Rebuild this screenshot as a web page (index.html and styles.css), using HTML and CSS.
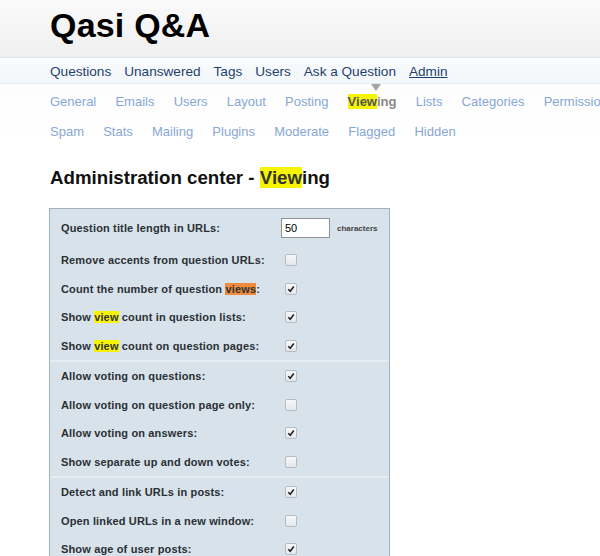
FILE: index.html
```html
<!DOCTYPE html>
<html>
<head>
<meta charset="utf-8">
<link rel="stylesheet" href="styles.css">
</head>
<body>
<div class="header">
  <div class="logo">Qasi Q&amp;A</div>
</div>
<div class="nav">
  <a>Questions</a><a>Unanswered</a><a>Tags</a><a>Users</a><a>Ask a Question</a><a class="cur">Admin</a>
</div>
<div class="sub">
  <div class="subrow">
    <a>General</a><a>Emails</a><a>Users</a><a>Layout</a><a>Posting</a><a class="sel"><mark class="y">View</mark>ing</a><a>Lists</a><a>Categories</a><a>Permissions</a>
  </div>
  <div class="subrow">
    <a>Spam</a><a>Stats</a><a>Mailing</a><a>Plugins</a><a>Moderate</a><a>Flagged</a><a>Hidden</a>
  </div>
</div>
<h1 class="title">Administration center - <mark class="y">View</mark>ing</h1>
<div class="box">
  <div class="group">
    <div class="row first"><span class="lbl">Question title length in URLs:</span><span class="val"><span class="inp">50</span><span class="unit">characters</span></span></div>
    <div class="row"><span class="lbl">Remove accents from question URLs:</span><span class="val"><span class="cb"></span></span></div>
    <div class="row"><span class="lbl">Count the number of question <mark class="o">views</mark>:</span><span class="val"><span class="cb on"><svg viewBox="0 0 8 8"><path d="M1.3 4.3 L3.2 6.2 L6.8 1.6" /></svg></span></span></div>
    <div class="row"><span class="lbl">Show <mark class="y">view</mark> count in question lists:</span><span class="val"><span class="cb on"><svg viewBox="0 0 8 8"><path d="M1.3 4.3 L3.2 6.2 L6.8 1.6" /></svg></span></span></div>
    <div class="row"><span class="lbl">Show <mark class="y">view</mark> count on question pages:</span><span class="val"><span class="cb on"><svg viewBox="0 0 8 8"><path d="M1.3 4.3 L3.2 6.2 L6.8 1.6" /></svg></span></span></div>
  </div>
  <div class="group">
    <div class="row"><span class="lbl">Allow voting on questions:</span><span class="val"><span class="cb on"><svg viewBox="0 0 8 8"><path d="M1.3 4.3 L3.2 6.2 L6.8 1.6" /></svg></span></span></div>
    <div class="row"><span class="lbl">Allow voting on question page only:</span><span class="val"><span class="cb"></span></span></div>
    <div class="row"><span class="lbl">Allow voting on answers:</span><span class="val"><span class="cb on"><svg viewBox="0 0 8 8"><path d="M1.3 4.3 L3.2 6.2 L6.8 1.6" /></svg></span></span></div>
    <div class="row"><span class="lbl">Show separate up and down votes:</span><span class="val"><span class="cb"></span></span></div>
  </div>
  <div class="group">
    <div class="row"><span class="lbl">Detect and link URLs in posts:</span><span class="val"><span class="cb on"><svg viewBox="0 0 8 8"><path d="M1.3 4.3 L3.2 6.2 L6.8 1.6" /></svg></span></span></div>
    <div class="row"><span class="lbl">Open linked URLs in a new window:</span><span class="val"><span class="cb"></span></span></div>
    <div class="row"><span class="lbl">Show age of user posts:</span><span class="val"><span class="cb on"><svg viewBox="0 0 8 8"><path d="M1.3 4.3 L3.2 6.2 L6.8 1.6" /></svg></span></span></div>
  </div>
</div>
</body>
</html>
```
FILE: styles.css
```css
html, body {
  margin: 0;
  padding: 0;
  overflow: hidden;
  background: #fff;
  font-family: "Liberation Sans", Arial, sans-serif;
}
body {
  width: 600px;
  height: 556px;
}
.header {
  height: 58px;
  background: linear-gradient(#fafafa, #efefef);
  border-bottom: 1px solid #dde5ec;
  box-sizing: border-box;
  padding-left: 50px;
}
.logo {
  font-weight: bold;
  font-size: 34px;
  line-height: 50px;
  color: #000;
  letter-spacing: 0.2px;
}
.nav {
  height: 26px;
  box-sizing: border-box;
  background: linear-gradient(#f9fbfd, #f3f7fa);
  border-bottom: 1px solid #e4ebf1;
  padding-left: 50px;
  display: flex;
  gap: 13px;
  align-items: center;
  padding-top: 2px;
}
.nav a {
  color: #1e416b;
  font-size: 13.6px;
}
.nav a.cur {
  text-decoration: underline;
}
.sub {
  padding-left: 50px;
  padding-top: 10px;
  display: flex;
  flex-direction: column;
  gap: 14px;
  background: linear-gradient(#fdfdfd, #fff);
}
.subrow {
  display: flex;
  gap: 19.2px;
  white-space: nowrap;
  width: 700px;
}
.subrow a {
  color: #87a7d6;
  font-size: 13px;
  line-height: 16px;
}
.subrow a.sel {
  color: #888;
  font-weight: bold;
  position: relative;
}
.subrow a.sel::before {
  content: "";
  position: absolute;
  left: 23px;
  top: -10px;
  border-left: 5px solid transparent;
  border-right: 5px solid transparent;
  border-top: 7px solid #a4a4a4;
}
mark {
  color: inherit;
  padding: 0;
}
mark.y { background: #f6f400; color: #333; }
.subrow a.sel mark.y { color: #555; }
mark.o { background: #ef8a3e; color: #333; }
.title {
  margin: 26px 0 0 50px;
  font-size: 18.7px;
  line-height: 24px;
  font-weight: bold;
  color: #111;
}
.box {
  margin: 18px 0 0 49px;
  width: 341px;
  box-sizing: border-box;
  border: 1px solid #a3b2c0;
  background: #d7e2ea;
  padding-top: 4px;
}
.group + .group {
  border-top: 2px solid #e4ecf1;
}
.row {
  display: flex;
  align-items: center;
  height: 28.5px;
  padding-left: 11px;
  font-size: 11px;
  font-weight: bold;
  color: #2b3035;
}
.row.first {
  height: 30px;
  margin-bottom: 3px;
}
.lbl {
  width: 224px;
  flex: none;
  letter-spacing: 0.15px;
}
.val {
  display: flex;
  align-items: center;
}
.inp {
  display: block;
  width: 49px;
  height: 20px;
  box-sizing: border-box;
  border: 1px solid #8c9298;
  background: #fff;
  font-weight: normal;
  font-size: 11px;
  line-height: 18px;
  padding-left: 3px;
  color: #000;
  margin-left: -4px;
}
.unit {
  font-size: 8px;
  color: #444;
  margin-left: 7px;
}
.cb {
  display: block;
  width: 10px;
  height: 10px;
  border: 1px solid #b5bcc4;
  border-radius: 2px;
  background: linear-gradient(#f7f8f9, #e5e8eb);
}
.cb svg {
  display: block;
  width: 8px;
  height: 8px;
  margin: 1px;
  fill: none;
  stroke: #222;
  stroke-width: 1.6;
}
```
